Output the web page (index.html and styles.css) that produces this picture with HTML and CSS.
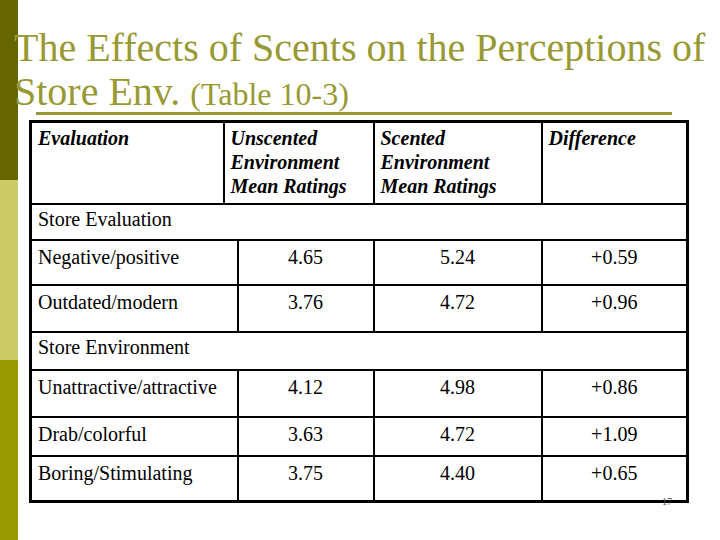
FILE: index.html
```html
<!DOCTYPE html>
<html>
<head>
<meta charset="utf-8">
<link rel="stylesheet" href="styles.css">
</head>
<body>
<div class="slide">
  <h1 class="title">The Effects of Scents on the Perceptions of<br>Store Env. <span class="sub">(Table 10-3)</span></h1>
  <div class="rule"></div>
  <div class="table-wrap">
    <table class="data">
      <colgroup>
        <col class="c1"><col class="c2"><col class="c3"><col class="c4"><col class="c5">
      </colgroup>
      <tr class="r-head">
        <th>Evaluation</th>
        <th colspan="2">Unscented<br>Environment<br>Mean Ratings</th>
        <th>Scented<br>Environment<br>Mean Ratings</th>
        <th>Difference</th>
      </tr>
      <tr class="r-sec1"><td colspan="5" class="sec">Store Evaluation</td></tr>
      <tr class="r-a"><td colspan="2">Negative/positive</td><td class="num">4.65</td><td class="num">5.24</td><td class="num">+0.59</td></tr>
      <tr class="r-b"><td colspan="2">Outdated/modern</td><td class="num">3.76</td><td class="num">4.72</td><td class="num">+0.96</td></tr>
      <tr class="r-sec2"><td colspan="5" class="sec">Store Environment</td></tr>
      <tr class="r-c"><td colspan="2">Unattractive/attractive</td><td class="num">4.12</td><td class="num">4.98</td><td class="num">+0.86</td></tr>
      <tr class="r-d"><td colspan="2">Drab/colorful</td><td class="num">3.63</td><td class="num">4.72</td><td class="num">+1.09</td></tr>
      <tr class="r-e"><td colspan="2">Boring/Stimulating</td><td class="num">3.75</td><td class="num">4.40</td><td class="num">+0.65</td></tr>
    </table>
    <span class="pagenum">17</span>
  </div>
</div>
</body>
</html>
```
FILE: styles.css
```css
html, body {
  margin: 0;
  padding: 0;
}
body {
  width: 720px;
  height: 540px;
  overflow: hidden;
  background:
    linear-gradient(to bottom, #666600 0, #666600 180px, #cccc66 180px, #cccc66 360px, #999900 360px, #999900 100%) no-repeat 0 0 / 18px 100%,
    #ffffff;
  font-family: "Liberation Serif", "Times New Roman", serif;
}
.title {
  margin: 0;
  padding: 26px 0 0 14px;
  font-weight: normal;
  font-size: 40px;
  line-height: 44px;
  height: 86px;
  color: #999933;
  white-space: nowrap;
}
.title .sub {
  font-size: 32px;
  line-height: 1;
}
.rule {
  margin: 0 0 0 36px;
  width: 636px;
  height: 3px;
  background: #999933;
}
.table-wrap {
  position: relative;
  margin: 5px 0 0 29px;
  width: 657px;
}
.data {
  border-collapse: collapse;
  width: 657px;
  table-layout: fixed;
  border: 3px solid #000;
  font-family: "Liberation Serif", "Times New Roman", serif;
  font-size: 20px;
  color: #000;
}
.c1 { width: 193px; }
.c2 { width: 14px; }
.c3 { width: 136px; }
.c4 { width: 168px; }
.c5 { width: 146px; }
.data th, .data td {
  border: 2px solid #000;
  vertical-align: top;
  text-align: left;
  padding: 5px 6px 0 6px;
  line-height: 22px;
  white-space: nowrap;
  font-family: "Liberation Serif", "Times New Roman", serif;
}
.data th {
  font-weight: bold;
  font-style: italic;
  line-height: 24px;
  padding-top: 3px;
}
.data td.num {
  text-align: center;
}
.data td.sec {
  padding-top: 3px;
}
.r-head { height: 82px; }
.r-sec1 { height: 36px; }
.r-a { height: 45px; }
.r-b { height: 47px; }
.r-sec2 { height: 38px; }
.r-c { height: 47px; }
.r-d { height: 39px; }
.r-e { height: 46px; }
.pagenum {
  position: absolute;
  right: 14px;
  bottom: -4px;
  font-family: "Liberation Serif", "Times New Roman", serif;
  font-size: 10px;
  line-height: 10px;
  color: #555;
}
```
